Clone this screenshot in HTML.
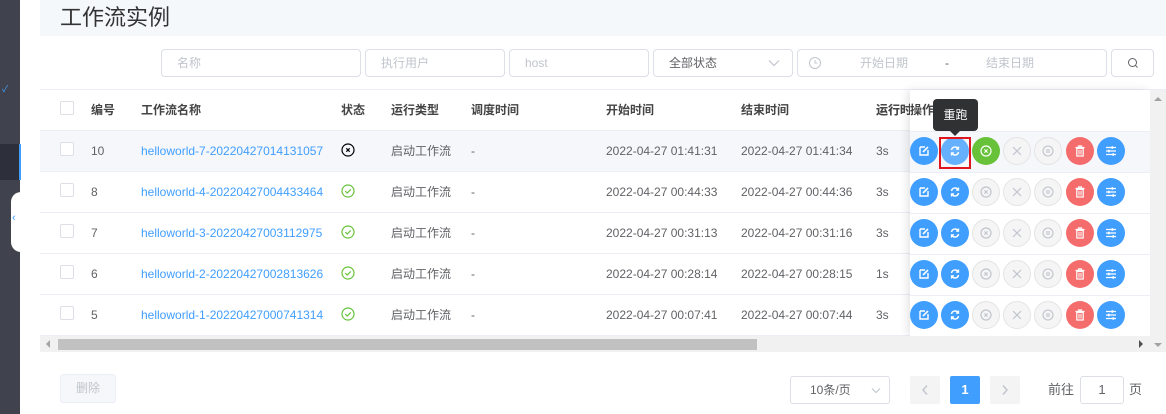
<!DOCTYPE html>
<html><head><meta charset="utf-8"><style>
*{box-sizing:border-box;margin:0;padding:0}
body{width:1166px;height:414px;overflow:hidden;background:#fff;font-family:"Liberation Sans","Noto Sans CJK SC",sans-serif;font-size:12px;color:#606266;position:relative}
.a{position:absolute}
.inp{position:absolute;top:49px;height:28px;border:1px solid #dcdfe6;border-radius:4px;color:#c0c4cc;font-size:12px;line-height:26px;padding-left:15px;background:#fff}
.cb{position:absolute;left:60px;width:14px;height:14px;border:1px solid #dcdfe6;border-radius:2px;background:#fff}
.row{position:absolute;left:40px;width:1110px;height:41px;border-bottom:1px solid #ebeef5}
.t{position:absolute;line-height:40px;font-size:12px;white-space:nowrap}
.b{position:absolute;width:28px;height:28px;border-radius:50%;display:flex;align-items:center;justify-content:center}
.bl{background:#409eff}.rd{background:#f56c6c}.gr{background:#67c23a}.ds{background:#f5f5f5;border:1px solid #e4e4e4}
</style></head><body>
<div class="a" style="left:0;top:0;width:20px;height:414px;background:#40434d"></div>
<div class="a" style="left:0;top:144px;width:19px;height:36px;background:#2d303b"></div>
<div class="a" style="left:19px;top:144px;width:2px;height:36px;background:#409eff"></div>
<div class="a" style="left:2px;top:82px;color:#409eff;font-size:9px">✓</div>
<div class="a" style="left:11px;top:192px;width:10px;height:60px;background:#fff;border-radius:10px 0 0 10px"></div>
<div class="a" style="left:12px;top:212px;color:#409eff;font-size:11px">‹</div>
<div class="a" style="left:40px;top:0;width:1126px;height:36px;background:#f5f8fb"></div>
<div class="a" style="left:60px;top:3px;font-size:22px;color:#333;line-height:30px">工作流实例</div>
<div class="inp" style="left:161px;width:200px">名称</div>
<div class="inp" style="left:365px;width:140px">执行用户</div>
<div class="inp" style="left:509px;width:140px">host</div>
<div class="inp" style="left:653px;width:140px;color:#606266">全部状态<svg class="a" style="right:12px;top:9px" width="12" height="8" viewBox="0 0 12 8"><path d="M1 1.5l5 5 5-5" fill="none" stroke="#c0c4cc" stroke-width="1.2"/></svg></div>
<div class="inp" style="left:797px;width:310px;padding-left:10px"><svg class="a" style="left:10px;top:6px" width="14" height="14" viewBox="0 0 14 14"><circle cx="7" cy="7" r="5.5" fill="none" stroke="#c0c4cc"/><path d="M7 4v3h2.5" fill="none" stroke="#c0c4cc"/></svg><span class="a" style="left:62px">开始日期</span><span class="a" style="left:147px;color:#606266">-</span><span class="a" style="left:188px">结束日期</span></div>
<div class="inp" style="left:1111px;width:43px;padding:0"><svg class="a" style="left:15px;top:7px" width="12" height="12" viewBox="0 0 12 12"><circle cx="5.5" cy="5.5" r="4" fill="none" stroke="#606266"/><path d="M8.5 8.5l2 2" stroke="#606266"/></svg></div>
<div class="a" style="left:40px;top:89px;width:1126px;height:1px;background:#ebeef5"></div>
<div class="row" style="top:90px;height:41px"></div>
<div class="cb" style="top:101px"></div>
<div class="t" style="top:90px;left:91px;color:#444;font-weight:bold">编号</div>
<div class="t" style="top:90px;left:141px;color:#444;font-weight:bold">工作流名称</div>
<div class="t" style="top:90px;left:341px;color:#444;font-weight:bold">状态</div>
<div class="t" style="top:90px;left:391px;color:#444;font-weight:bold">运行类型</div>
<div class="t" style="top:90px;left:471px;color:#444;font-weight:bold">调度时间</div>
<div class="t" style="top:90px;left:606px;color:#444;font-weight:bold">开始时间</div>
<div class="t" style="top:90px;left:741px;color:#444;font-weight:bold">结束时间</div>
<div class="t" style="top:90px;left:876px;color:#444;font-weight:bold">运行时长</div>
<div class="row" style="top:131px;background:#f5f7fa"></div>
<div class="row" style="top:172px"></div>
<div class="row" style="top:213px"></div>
<div class="row" style="top:254px"></div>
<div class="row" style="top:295px"></div>
<div class="cb" style="top:142px"></div><div class="cb" style="top:183px"></div><div class="cb" style="top:224px"></div><div class="cb" style="top:265px"></div><div class="cb" style="top:306px"></div>
<div class="t" style="top:131px;left:91px">10</div>
<div class="t" style="top:172px;left:91px">8</div>
<div class="t" style="top:213px;left:91px">7</div>
<div class="t" style="top:254px;left:91px">6</div>
<div class="t" style="top:295px;left:91px">5</div>
<div class="t" style="top:131px;left:141px;color:#409eff">helloworld-7-20220427014131057</div>
<div class="t" style="top:172px;left:141px;color:#409eff">helloworld-4-20220427004433464</div>
<div class="t" style="top:213px;left:141px;color:#409eff">helloworld-3-20220427003112975</div>
<div class="t" style="top:254px;left:141px;color:#409eff">helloworld-2-20220427002813626</div>
<div class="t" style="top:295px;left:141px;color:#409eff">helloworld-1-20220427000741314</div>
<svg class="a" style="left:341px;top:143px" width="14" height="14" viewBox="0 0 14 14"><circle cx="7" cy="7" r="6" fill="none" stroke="#000" stroke-width="1.2"/><path d="M5.3 5.3l3.4 3.4M8.7 5.3l-3.4 3.4" stroke="#000" stroke-width="1.2"/></svg>
<svg class="a" style="left:341px;top:184px" width="14" height="14" viewBox="0 0 14 14"><circle cx="7" cy="7" r="6" fill="none" stroke="#67c23a" stroke-width="1.2"/><path d="M4.2 7l2 2 3.6-3.6" fill="none" stroke="#67c23a" stroke-width="1.2"/></svg>
<svg class="a" style="left:341px;top:225px" width="14" height="14" viewBox="0 0 14 14"><circle cx="7" cy="7" r="6" fill="none" stroke="#67c23a" stroke-width="1.2"/><path d="M4.2 7l2 2 3.6-3.6" fill="none" stroke="#67c23a" stroke-width="1.2"/></svg>
<svg class="a" style="left:341px;top:266px" width="14" height="14" viewBox="0 0 14 14"><circle cx="7" cy="7" r="6" fill="none" stroke="#67c23a" stroke-width="1.2"/><path d="M4.2 7l2 2 3.6-3.6" fill="none" stroke="#67c23a" stroke-width="1.2"/></svg>
<svg class="a" style="left:341px;top:307px" width="14" height="14" viewBox="0 0 14 14"><circle cx="7" cy="7" r="6" fill="none" stroke="#67c23a" stroke-width="1.2"/><path d="M4.2 7l2 2 3.6-3.6" fill="none" stroke="#67c23a" stroke-width="1.2"/></svg>
<div class="t" style="top:131px;left:391px">启动工作流</div><div class="t" style="top:172px;left:391px">启动工作流</div><div class="t" style="top:213px;left:391px">启动工作流</div><div class="t" style="top:254px;left:391px">启动工作流</div><div class="t" style="top:295px;left:391px">启动工作流</div>
<div class="t" style="top:131px;left:471px">-</div><div class="t" style="top:172px;left:471px">-</div><div class="t" style="top:213px;left:471px">-</div><div class="t" style="top:254px;left:471px">-</div><div class="t" style="top:295px;left:471px">-</div>
<div class="t" style="top:131px;left:606px">2022-04-27 01:41:31</div><div class="t" style="top:131px;left:741px">2022-04-27 01:41:34</div><div class="t" style="top:131px;left:876px">3s</div>
<div class="t" style="top:172px;left:606px">2022-04-27 00:44:33</div><div class="t" style="top:172px;left:741px">2022-04-27 00:44:36</div><div class="t" style="top:172px;left:876px">3s</div>
<div class="t" style="top:213px;left:606px">2022-04-27 00:31:13</div><div class="t" style="top:213px;left:741px">2022-04-27 00:31:16</div><div class="t" style="top:213px;left:876px">3s</div>
<div class="t" style="top:254px;left:606px">2022-04-27 00:28:14</div><div class="t" style="top:254px;left:741px">2022-04-27 00:28:15</div><div class="t" style="top:254px;left:876px">1s</div>
<div class="t" style="top:295px;left:606px">2022-04-27 00:07:41</div><div class="t" style="top:295px;left:741px">2022-04-27 00:07:44</div><div class="t" style="top:295px;left:876px">3s</div>
<div class="a" style="left:910px;top:90px;width:240px;height:246px;background:#fff;box-shadow:-3px 0 8px rgba(0,0,0,.10)"></div>
<div class="a" style="left:910px;top:131px;width:240px;height:41px;background:#f5f7fa"></div>
<div class="a" style="left:910px;top:131px;width:240px;height:1px;background:#ebeef5"></div>
<div class="a" style="left:910px;top:172px;width:240px;height:1px;background:#ebeef5"></div>
<div class="a" style="left:910px;top:213px;width:240px;height:1px;background:#ebeef5"></div>
<div class="a" style="left:910px;top:254px;width:240px;height:1px;background:#ebeef5"></div>
<div class="a" style="left:910px;top:295px;width:240px;height:1px;background:#ebeef5"></div>
<div class="t" style="top:90px;left:876px;color:#444;font-weight:bold;width:34px;overflow:hidden">运行时长</div>
<div class="t" style="top:90px;left:910px;color:#444;font-weight:bold">操作</div>
<div id="btns"></div>
<script>
const ys=[137,178,219,260,301];
const xs=[910,941,972,1003,1034,1066,1097];
const ed='<svg width="12" height="12" viewBox="0 0 12 12"><path d="M2 2h5M2 2v8h8V5" fill="none" stroke="#fff" stroke-width="1.4"/><path d="M5 7l5-5" stroke="#fff" stroke-width="1.6"/></svg>';
const re='<svg width="12" height="12" viewBox="0 0 12 12"><path d="M2.5 5A3.6 3.6 0 0 1 9 3.5M9.5 7A3.6 3.6 0 0 1 3 8.5" fill="none" stroke="#fff" stroke-width="1.5"/><path d="M9.5 1.5v2.6H7M2.5 10.5V7.9H5" fill="none" stroke="#fff" stroke-width="1.3"/></svg>';
const st=c=>'<svg width="12" height="12" viewBox="0 0 12 12"><circle cx="6" cy="6" r="5" fill="none" stroke="'+c+'" stroke-width="1.2"/><path d="M4.4 4.4l3.2 3.2M7.6 4.4l-3.2 3.2" stroke="'+c+'" stroke-width="1.1"/></svg>';
const x='<svg width="12" height="12" viewBox="0 0 12 12"><path d="M2 2l8 8M10 2l-8 8" stroke="#c0c4cc" stroke-width="1.2"/></svg>';
const pa='<svg width="12" height="12" viewBox="0 0 12 12"><circle cx="6" cy="6" r="5" fill="none" stroke="#c0c4cc" stroke-width="1.1"/><path d="M5 4v4M7 4v4" stroke="#c0c4cc" stroke-width="1.1"/></svg>';
const dl='<svg width="12" height="12" viewBox="0 0 12 12"><path d="M1.5 2.5h9M4.5 2.5V1h3v1.5" fill="none" stroke="#fff" stroke-width="1.2"/><rect x="2.8" y="3.5" width="6.4" height="7.5" fill="none" stroke="#fff" stroke-width="1.2"/><path d="M5 5v4.5M7 5v4.5" stroke="#fff"/></svg>';
const sl='<svg width="12" height="12" viewBox="0 0 12 12"><path d="M1 2.5h10M1 6h10M1 9.5h10" stroke="#fff" stroke-width="1.3"/><rect x="6.5" y="1.2" width="1.6" height="2.6" fill="#fff"/><rect x="3" y="4.7" width="1.6" height="2.6" fill="#fff"/><rect x="7.5" y="8.2" width="1.6" height="2.6" fill="#fff"/></svg>';
let h='';
ys.forEach((y,i)=>{
 const cls=['bl','bl',i==0?'gr':'ds','ds','ds','rd','bl'];
 const ic=[ed,re,i==0?st('#fff'):st('#c0c4cc'),x,pa,dl,sl];
 xs.forEach((xx,j)=>{let extra=(i==0&&j==1)?'background:#66b1ff;':''; h+='<div class="b '+cls[j]+'" style="left:'+xx+'px;top:'+y+'px;'+extra+'">'+ic[j]+'</div>';});
});
document.getElementById('btns').outerHTML=h;
</script>
<div class="a" style="left:939px;top:137px;width:32px;height:32px;border:2px solid #e0161f"></div>
<div class="a" style="left:933px;top:99px;width:45px;height:32px;background:#303133;border-radius:4px;color:#fff;font-size:12px;text-align:center;line-height:32px">重跑</div>
<div class="a" style="left:950px;top:131px;width:0;height:0;border-left:5px solid transparent;border-right:5px solid transparent;border-top:5px solid #303133"></div>
<div class="a" style="left:40px;top:336px;width:1110px;height:16px;background:#f1f1f1"></div>
<div class="a" style="left:58px;top:339px;width:699px;height:11px;background:#c1c1c1"></div>
<div class="a" style="left:46px;top:340px;width:0;height:0;border-top:4px solid transparent;border-bottom:4px solid transparent;border-right:4px solid #a3a3a3"></div>
<div class="a" style="left:1139px;top:340px;width:0;height:0;border-top:4px solid transparent;border-bottom:4px solid transparent;border-left:4px solid #505050"></div>
<div class="a" style="left:1150px;top:90px;width:16px;height:262px;background:#f1f1f1"></div>
<div class="a" style="left:1154px;top:97px;width:0;height:0;border-left:4px solid transparent;border-right:4px solid transparent;border-bottom:4px solid #a3a3a3"></div>
<div class="a" style="left:1154px;top:343px;width:0;height:0;border-left:4px solid transparent;border-right:4px solid transparent;border-top:4px solid #a3a3a3"></div>
<div class="a" style="left:60px;top:374px;width:56px;height:29px;border:1px solid #ebeef5;background:#f5f7fa;border-radius:3px;color:#c0c4cc;text-align:center;line-height:27px">删除</div>
<div class="a" style="left:790px;top:376px;width:100px;height:28px;border:1px solid #dcdfe6;border-radius:3px;line-height:26px;padding-left:19px;color:#606266">10条/页<svg class="a" style="right:8px;top:10px" width="10" height="7" viewBox="0 0 10 7"><path d="M1 1.5l4 4 4-4" fill="none" stroke="#c0c4cc" stroke-width="1.1"/></svg></div>
<div class="a" style="left:910px;top:376px;width:30px;height:28px;background:#f4f4f5;border-radius:2px"><svg class="a" style="left:11px;top:8px" width="8" height="12" viewBox="0 0 8 12"><path d="M6 1.5L2 6l4 4.5" fill="none" stroke="#c0c4cc" stroke-width="1.4"/></svg></div>
<div class="a" style="left:950px;top:376px;width:30px;height:28px;background:#409eff;border-radius:2px;color:#fff;text-align:center;line-height:28px;font-weight:bold;font-size:13px">1</div>
<div class="a" style="left:990px;top:376px;width:30px;height:28px;background:#f4f4f5;border-radius:2px"><svg class="a" style="left:11px;top:8px" width="8" height="12" viewBox="0 0 8 12"><path d="M2 1.5L6 6l-4 4.5" fill="none" stroke="#c0c4cc" stroke-width="1.4"/></svg></div>
<div class="a" style="left:1048px;top:376px;line-height:28px;font-size:13px">前往</div>
<div class="a" style="left:1080px;top:376px;width:44px;height:28px;border:1px solid #dcdfe6;border-radius:3px;text-align:center;line-height:26px;font-size:13px">1</div>
<div class="a" style="left:1129px;top:376px;line-height:28px;font-size:13px">页</div>
</body></html>
